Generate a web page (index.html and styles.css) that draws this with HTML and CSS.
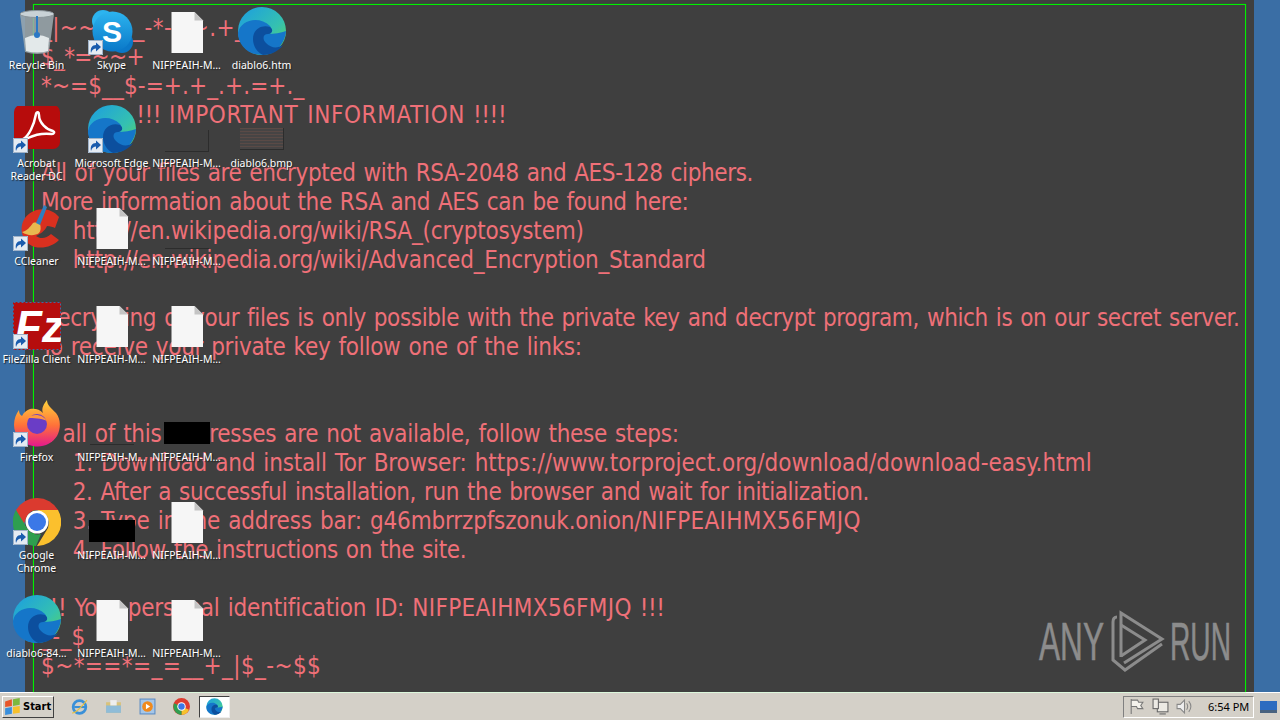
FILE: index.html
```html
<!DOCTYPE html>
<html lang="en">
<head>
<meta charset="utf-8">
<title>Desktop</title>
<link rel="stylesheet" href="styles.css">
</head>
<body>
<svg class="defs" width="0" height="0">
  <defs>
    <symbol id="arrow" viewBox="0 0 15 15"><rect width="15" height="15" fill="#e4ebf3"/><path d="M.5.500h14v14H.5z" fill="none" stroke="#9fb2c8"/><path d="M3 13c-1-5 1-8 5-8V2.500L13 7l-5 4.500V8.500c-2 0-4 1-5 4.500z" fill="#1a5cae"/></symbol>
    <symbol id="page" viewBox="0 0 48 48"><path d="M8.500 4h23l8.500 8.500V45H8.500z" fill="#f6f6f6"/><path d="M31.500 4v8.500H40z" fill="#c4c4c4"/></symbol>
    <symbol id="edge" viewBox="0 0 50 50"><defs><linearGradient id="eg" x1="0" y1="0" x2="1" y2="1"><stop offset="0" stop-color="#1b9de2"/><stop offset=".6" stop-color="#35c1b0"/><stop offset="1" stop-color="#62d84e"/></linearGradient></defs><circle cx="25" cy="25" r="24" fill="url(#eg)"/><path d="M1 27C3 14 22 9 33 20c3 4 2 8-2 8 6 0 13-1 18-3-1 13-11 24-24 24C11 49 1 39 1 27z" fill="#1576c9"/><path d="M16 33c0-10 9-15 17-12 4 3 2 7-2 7-5 0-6 5-2 9 5 5 11 6 17 2-4 6-12 10-20 10-6-3-10-9-10-16z" fill="#0c4f9e"/></symbol>
  </defs>
</svg>
<div class="desktop">
  <main class="window">
    <div class="frame">
<pre class="note"><span class="sym">_|~~*$__-*-~~.+_.-+.</span>
<span class="sym-tight">$_*=~~+</span>
<span class="sym-mid">*~=$__$-=+.+_.+.=+._</span>
            !!! <span class="caps-wide">IMPORTANT INFORMATION</span> !!!!

All of your files are encrypted with RSA-2048 and AES-128 ciphers.
More information about the RSA and AES can be found here:
    <span class="wiki">http://en.wikipedia.org/wiki/RSA_(cryptosystem)</span>
    <span class="wiki">http://en.wikipedia.org/wiki/Advanced_Encryption_Standard</span>

Decrypting of your files is only possible with the private key and decrypt program, which is on our secret server.
<span class="loose">To receive your private key follow one of the links:</span>


<span class="loose">If all of this addresses are not available, follow these steps:</span>
    <span class="wiki">1. Download and install Tor Browser: </span><span class="url">https://www.torproject.org/download/download-easy.html</span>
    2. After a successful installation, run the browser and wait for initialization.
    <span class="wiki">3. Type in the address bar: g46mbrrzpfszonuk.onion/</span><span class="caps">NIFPEAIHMX56FMJQ</span>
    4. Follow the instructions on the site.

<span class="wiki">!!! Your personal identification ID: </span><span class="caps">NIFPEAIHMX56FMJQ</span> !!!
<span class="sym">_-_$
$~*==*=_=__+_|$_-~$$</span></pre>
    </div>
    <svg class="watermark" viewBox="0 0 200 62" fill="none" stroke="#8c8c8c" stroke-width="3">
      <text class="wm-text" x="1" y="50" textLength="65" lengthAdjust="spacingAndGlyphs">ANY</text>
      <path d="M83 47V3l41 26-38 24"/><path d="M83 15l24 15-24 16"/><path d="M79 7q-4 0-4 5v38l12 10 37-26"/>
      <text class="wm-text" x="132" y="50" textLength="61" lengthAdjust="spacingAndGlyphs">RUN</text>
    </svg>
  </main>

  <section class="icons">
    <div class="icon"><svg class="glyph" viewBox="0 0 48 48"><path d="M7 6h34l-5 38q-12 4-24 0z" fill="#9eaab0" opacity=".85"/><ellipse cx="24" cy="6" rx="17" ry="3.500" fill="#c9d2d6" stroke="#8a949a"/><path d="M12 30q12-6 24 0l-1 13q-11 3-22 0z" fill="#e3e9ea"/><path d="M24 8v18" stroke="#2b78c5" stroke-width="2"/><circle cx="24" cy="27" r="3" fill="#2b78c5"/></svg><span class="label">Recycle Bin</span></div>
    <div class="icon"><svg class="glyph" viewBox="0 0 48 48"><rect x="1" y="-1" width="46" height="44" rx="7" fill="#b70c0c"/><path d="M10 33c6-3 11-14 13-25 1-3 3-2 3 1 0 8 8 15 14 16 2 1 1 3-1 3-8-1-18 1-24 4-3 2-6 3-5 1z" fill="none" stroke="#fff" stroke-width="2.500"/></svg><svg class="shortcut"><use href="#arrow"/></svg><span class="label">Acrobat Reader DC</span></div>
    <div class="icon"><svg class="glyph" viewBox="0 0 48 48"><path d="M46 13C37 2 20 3 12 14 5 24 9 39 22 43c9 2 18-1 24-7l-8-6c-5 5-11 5-15 2 4-2 9-5 11-10 3 0 6 1 8 2z" fill="#d9301f"/><path d="M20 19c3-1 5 0 7 1 1 3 1 7-1 9-4 3-12 3-17-1 5-1 8-5 11-9z" fill="#e8b94f"/><path d="M31 1l3 2-7 18-4-2z" fill="#2e7fc0"/></svg><svg class="shortcut"><use href="#arrow"/></svg><span class="label">CCleaner</span></div>
    <div class="icon"><svg class="glyph" viewBox="0 0 48 48"><rect width="48" height="48" fill="#b50d0d"/><rect x=".5" y=".5" width="47" height="47" fill="none" stroke="#3a6ea5" stroke-dasharray="2 2"/><text class="fz" x="2" y="40">Fz</text></svg><svg class="shortcut"><use href="#arrow"/></svg><span class="label">FileZilla Client</span></div>
    <div class="icon"><svg class="glyph" viewBox="0 0 48 48"><defs><linearGradient id="fx" x1="0" y1="0" x2="0" y2="1"><stop offset="0" stop-color="#ffd43b"/><stop offset=".55" stop-color="#ff7139"/><stop offset="1" stop-color="#e3188d"/></linearGradient></defs><path d="M34 0c0 5 4 8 9 13 5 6 5 16 1 23-5 8-15 12-24 10C9 44 1 35 1 25c0-6 2-11 5-15 0 3 1 5 3 6 2-4 5-6 8-7 4-1 10 0 13 4-2-5 1-9 4-13z" fill="url(#fx)"/><circle cx="24" cy="24" r="10" fill="#6a3dc6"/><path d="M14 18c6-5 16-4 20 3-6-3-13-3-20-3z" fill="#ff9640"/></svg><svg class="shortcut"><use href="#arrow"/></svg><span class="label">Firefox</span></div>
    <div class="icon"><svg class="glyph" viewBox="0 0 48 48"><path d="M24 0a24 24 0 0 1 21 12H24z" fill="#db3a2f"/><path d="M3 12A24 24 0 0 1 24 0v12a12 12 0 0 0-10 6l-4 10z" fill="#db3a2f"/><path d="M45 12a24 24 0 0 1-21 36l11-18 1-6-2-6-10-6z" fill="#fbc02d"/><path d="M3 12l11 18a12 12 0 0 0 14 6l-5 12A24 24 0 0 1 3 12z" fill="#2e9e4f"/><circle cx="24" cy="24" r="11.500" fill="#fff"/><circle cx="24" cy="24" r="9" fill="#3b78e7"/></svg><svg class="shortcut"><use href="#arrow"/></svg><span class="label">Google Chrome</span></div>
    <div class="icon"><svg class="glyph edge-lg"><use href="#edge"/></svg><span class="label">diablo6-84…</span></div>

    <div class="icon"><svg class="glyph" viewBox="0 0 48 48"><defs><linearGradient id="sk" x1="0" y1="0" x2="0" y2="1"><stop offset="0" stop-color="#2cb4ef"/><stop offset="1" stop-color="#0a78c8"/></linearGradient></defs><circle cx="15" cy="13" r="11" fill="#2cb4ef"/><circle cx="34" cy="34" r="11" fill="#0a78c8"/><circle cx="24.500" cy="23.500" r="20" fill="url(#sk)"/><text class="sk" x="14" y="34">S</text></svg><svg class="shortcut"><use href="#arrow"/></svg><span class="label">Skype</span></div>
    <div class="icon"><svg class="glyph edge-lg"><use href="#edge"/></svg><svg class="shortcut"><use href="#arrow"/></svg><span class="label">Microsoft Edge</span></div>
    <div class="icon"><svg class="glyph"><use href="#page"/></svg><span class="label">NIFPEAIH-M…</span></div>
    <div class="icon"><svg class="glyph"><use href="#page"/></svg><span class="label">NIFPEAIH-M…</span></div>
    <div class="icon"><div class="glyph"><b class="thumb line"></b></div><span class="label">NIFPEAIH-M…</span></div>
    <div class="icon"><div class="glyph"><b class="black"></b></div><span class="label">NIFPEAIH-M…</span></div>
    <div class="icon"><svg class="glyph"><use href="#page"/></svg><span class="label">NIFPEAIH-M…</span></div>

    <div class="icon"><svg class="glyph"><use href="#page"/></svg><span class="label">NIFPEAIH-M…</span></div>
    <div class="icon"><div class="glyph"><b class="thumb"></b></div><span class="label">NIFPEAIH-M…</span></div>
    <div class="icon"><div class="glyph"><b class="thumb line"></b></div><span class="label">NIFPEAIH-M…</span></div>
    <div class="icon"><svg class="glyph"><use href="#page"/></svg><span class="label">NIFPEAIH-M…</span></div>
    <div class="icon"><div class="glyph"><b class="black"></b></div><span class="label">NIFPEAIH-M…</span></div>
    <div class="icon"><svg class="glyph"><use href="#page"/></svg><span class="label">NIFPEAIH-M…</span></div>
    <div class="icon"><svg class="glyph"><use href="#page"/></svg><span class="label">NIFPEAIH-M…</span></div>

    <div class="icon"><svg class="glyph edge-lg"><use href="#edge"/></svg><span class="label">diablo6.htm</span></div>
    <div class="icon"><div class="glyph"><b class="thumb text"></b></div><span class="label">diablo6.bmp</span></div>
  </section>

  <footer class="taskbar">
    <button class="start"><svg class="start-flag" viewBox="0 0 16 16"><path d="M1 3l6-2v6l-6 1z" fill="#e8562a"/><path d="M8 1l6-1v6l-6 1z" fill="#7cb83e"/><path d="M1 9l6-1v6l-6 1z" fill="#3a8fdc"/><path d="M8 8l6-1v6l-6 1z" fill="#f7c02b"/></svg>Start</button>
    <div class="quick">
      <svg class="tb" viewBox="0 0 16 16"><circle cx="8" cy="8.500" r="6" fill="none" stroke="#3a90d8" stroke-width="2.500"/><path d="M3 8.500h11" stroke="#3a90d8" stroke-width="2"/><path d="M1 14C4 15 12 6 15 2" stroke="#e8c040" fill="none"/></svg>
      <svg class="tb" viewBox="0 0 16 16"><path d="M1 4h14v10H1z" fill="#d9c27a"/><path d="M1 7h14v7H1z" fill="#8fbcd8"/><path d="M5 2h6v5H5z" fill="#eee"/></svg>
      <svg class="tb" viewBox="0 0 16 16"><rect x="1" y="1" width="14" height="14" fill="#a5c6e8" stroke="#5b8dc4"/><circle cx="8" cy="8" r="5" fill="#f08a1d"/><path d="M6.500 5.500l4 2.500-4 2.500z" fill="#fff"/></svg>
      <svg class="tb" viewBox="0 0 16 16"><circle cx="8" cy="8" r="8" fill="#dd3d30"/><path d="M8 8l7 3a8 8 0 0 1-7 5z" fill="#f6c22d"/><path d="M8 8v8a8 8 0 0 1-7-11z" fill="#2f9e50"/><circle cx="8" cy="8" r="4" fill="#fff"/><circle cx="8" cy="8" r="3" fill="#3b78e7"/></svg>
      <div class="active"><svg class="tb"><use href="#edge"/></svg></div>
    </div>
    <div class="tray">
      <svg class="ti" viewBox="0 0 16 16" fill="none" stroke="#777"><path d="M3 1v14M3 2h6l1 2h4l-2 3 2 3H9L8 8H3" fill="#f4f2ec"/></svg>
      <svg class="ti" viewBox="0 0 16 16" fill="#eceae4" stroke="#666"><rect x="5" y="4" width="10" height="9"/><rect x="1" y="1" width="5" height="9"/><path d="M7 15h6"/></svg>
      <svg class="ti" viewBox="0 0 16 16" fill="none" stroke="#888"><path d="M1 6h3l4-4v12l-4-4H1z" fill="#eee"/><path d="M10 5q2 3 0 6M12 3q4 5 0 10"/></svg>
      <span class="clock">6:54 PM</span>
    </div>
    <svg class="show-desktop" viewBox="0 0 17 12"><rect width="17" height="9" fill="#2d6cc0"/><path d="M0 9h17v3H0z" fill="#48627f"/></svg>
  </footer>
</div>
</body>
</html>
```

FILE: styles.css
```css
* { box-sizing: border-box; }
html, body { margin: 0; height: 100%; overflow: hidden; }
.defs { position: absolute; }
.desktop { position: relative; width: 1280px; height: 720px; display: flex; flex-direction: column; background: #3a6ea5; font-family: "Noto Sans", Arial, sans-serif; }
.window { position: relative; flex: 1; margin: 0 26px 0 25px; padding: 4px 8px 0; background: #3f3f3f; }
.frame { height: 100%; border: 1px solid #00f000; border-bottom: 0; padding: 9px 0 0 7px; box-shadow: 0 0 1px rgba(0, 200, 0, .8); }
.note { margin: 0; font-family: "DejaVu Sans Condensed", "DejaVu Sans", sans-serif; font-stretch: condensed; font-size: 24px; line-height: 29px; color: #ef7078; white-space: pre; word-spacing: 1.46px; letter-spacing: -.38px; }
.sym { letter-spacing: .4px; }
.sym-tight { letter-spacing: -.7px; }
.sym-mid { letter-spacing: .1px; }
.caps { letter-spacing: .32px; }
.caps-wide { letter-spacing: .62px; }
.loose { letter-spacing: -.28px; }
.wiki { letter-spacing: -.18px; }
.url { letter-spacing: 0; }
.watermark { position: absolute; left: 1013px; top: 610px; width: 200px; height: 62px; }
.wm-text { font-family: "Liberation Sans", sans-serif; font-size: 54px; fill: #8c8c8c; stroke-width: .6px; }
.icons { position: absolute; left: -1px; top: 0; display: grid; grid-template-rows: repeat(7, 98px); grid-auto-flow: column; grid-auto-columns: 75px; }
.icon { position: relative; display: flex; flex-direction: column; align-items: center; padding-top: 8px; }
.glyph { position: relative; display: block; width: 48px; height: 48px; flex: none; }
.edge-lg { width: 50px; height: 50px; margin-top: -2px; }
.shortcut { position: absolute; left: 14px; top: 40px; width: 15px; height: 15px; }
.label { margin-top: 3px; width: 75px; text-align: center; font-family: "Noto Sans", sans-serif; font-size: 10.500px; line-height: 13px; color: #fff; text-shadow: 1px 1px 1px #222; word-break: keep-all; }
.fz { font-family: "Liberation Sans", sans-serif; font-weight: 700; font-style: italic; font-size: 44px; fill: #fff; }
.sk { font-family: "Liberation Sans", sans-serif; font-weight: 700; font-size: 30px; fill: #fff; }
.black { position: absolute; left: 1px; top: 22px; width: 46px; height: 22px; background: #000; }
.thumb { position: absolute; left: 2px; top: 24px; width: 44px; height: 22px; border-right: 1px solid #2c2c2c; border-bottom: 1px solid #2c2c2c; }
.thumb.line { top: 22px; height: 23px; border-right: 0; }
.thumb.text { top: 22px; background: repeating-linear-gradient(#5a4a46 0 1px, #464444 1px 3px); }
.taskbar { height: 28px; flex: none; display: flex; align-items: center; padding-left: 2px; background: #d4d0c8; border-top: 1px solid #fff; }
.start { display: flex; align-items: center; gap: 1px; width: 52px; height: 22px; padding: 0 1px; border: 1px solid; border-color: #fff #404040 #404040 #fff; background: #d4d0c8; font-family: "DejaVu Sans Condensed", "DejaVu Sans", sans-serif; font-stretch: condensed; font-size: 11px; font-weight: 700; color: #000; }
.start-flag { width: 18px; height: 18px; flex: none; }
.quick { display: flex; align-items: center; margin-left: 17px; gap: 17px; }
.tb { width: 17px; height: 17px; display: block; }
.active { margin-left: -8px; width: 31px; height: 22px; display: flex; align-items: center; justify-content: center; background: #fff; border: 1px solid; border-color: #404040 #eee #eee #404040; }
.tray { margin-left: auto; width: 131px; height: 22px; display: flex; align-items: center; gap: 7px; padding-left: 4px; border: 1px solid; border-color: #808080 #fff #fff #808080; }
.ti { width: 17px; height: 17px; flex: none; }
.clock { margin-left: 8px; font-size: 11px; color: #000; white-space: nowrap; }
.show-desktop { width: 17px; height: 12px; margin: 0 3px 0 6px; flex: none; }
```
